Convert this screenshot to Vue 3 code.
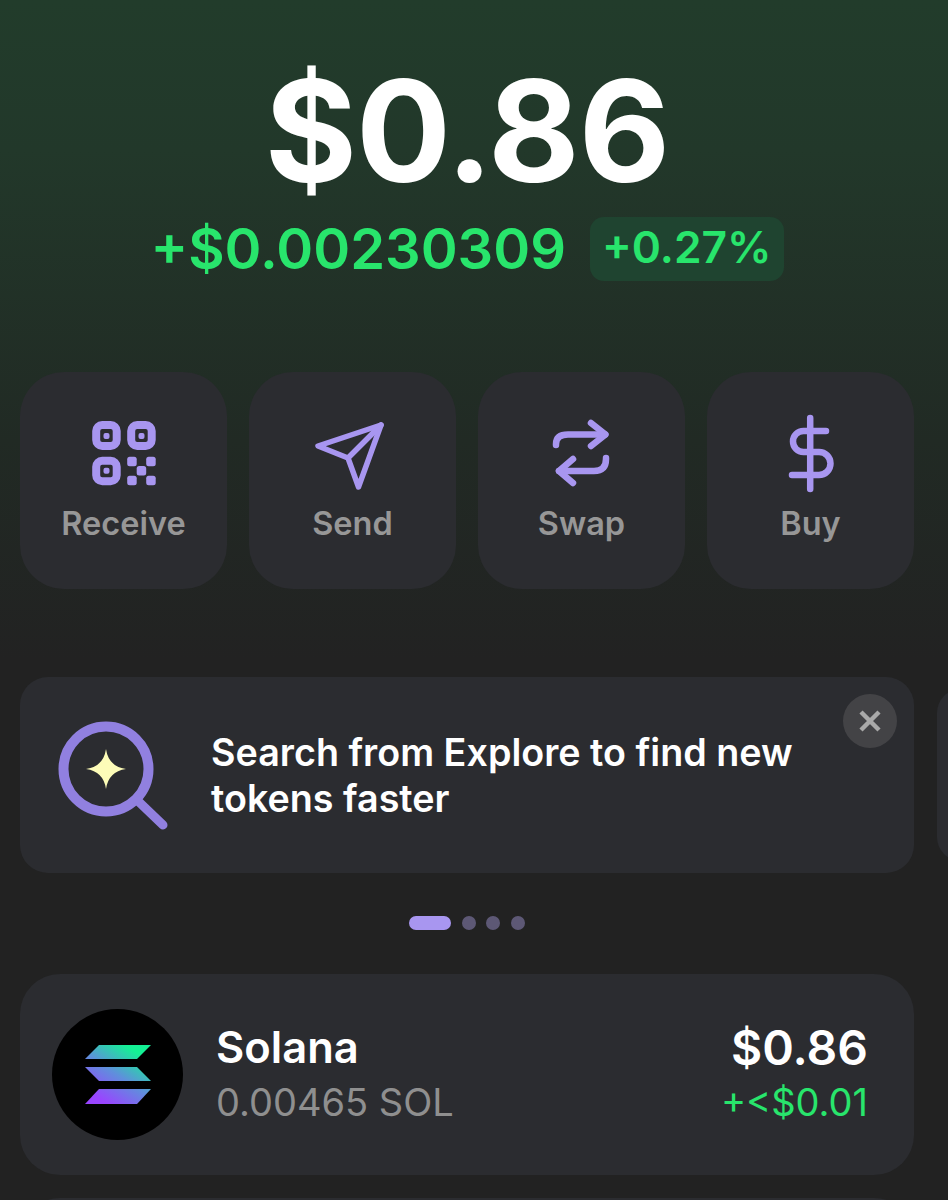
<script setup>
const actions = ['Receive', 'Send', 'Swap', 'Buy']
</script>

<template>
  <div class="page">
    <section class="hero">
      <div class="balance">$0.86</div>
      <div class="change">
        <span class="delta">+$0.00230309</span>
        <span class="pct">+0.27%</span>
      </div>
    </section>

    <section class="actions">
      <div v-for="a in actions" :key="a" class="action">
        <svg v-if="a === 'Receive'" class="icon" viewBox="0 0 72 72" fill="none">
          <g stroke="#a896f0" stroke-width="8">
            <rect x="8.200" y="7" width="20.500" height="21" rx="6" />
            <rect x="43.200" y="7" width="20.500" height="21" rx="6" />
            <rect x="8.200" y="42.700" width="20.500" height="20.500" rx="6" />
          </g>
          <g fill="#a896f0">
            <rect x="15.500" y="15" width="6" height="6" rx="2" />
            <rect x="50.500" y="15" width="6" height="6" rx="2" />
            <rect x="15.500" y="49.800" width="6" height="6" rx="2" />
            <rect x="39.200" y="38.700" width="9.500" height="9.500" rx="2.500" />
            <rect x="58.200" y="38.700" width="9.500" height="9.500" rx="2.500" />
            <rect x="48.700" y="48" width="9.500" height="9.500" rx="2.500" />
            <rect x="39.200" y="57.700" width="9.500" height="9.500" rx="2.500" />
            <rect x="58.200" y="57.700" width="9.500" height="9.500" rx="2.500" />
          </g>
        </svg>
        <svg v-else-if="a === 'Send'" class="icon" viewBox="0 0 72 72" fill="none" stroke="#a896f0" stroke-width="5.500" stroke-linejoin="round" stroke-linecap="round">
          <path d="M64 7 1 28 31 40 41.500 69Z" />
          <path d="M64 7 31 40" />
        </svg>
        <svg v-else-if="a === 'Swap'" class="icon" viewBox="0 0 72 72" fill="none" stroke="#a896f0" stroke-width="6.500" stroke-linejoin="round" stroke-linecap="round">
          <path d="M10 27V26Q10 16.500 22 16.500H59" />
          <path d="M45 5 59.500 16.500 45 28" />
          <path d="M60 40V41Q60 53 48 53H13" />
          <path d="M27 41 13 53 27 65" />
        </svg>
        <svg v-else class="icon" viewBox="0 0 72 72" fill="none" stroke="#a896f0" stroke-width="6.500" stroke-linecap="round">
          <path d="M35.200 0V71" />
          <path d="M51 13H28.500A10.500 10.500 0 0 0 28.500 34H44A11.500 11.500 0 0 1 44 57H17" />
        </svg>
        <span class="label">{{ a }}</span>
      </div>
    </section>

    <section class="carousel">
      <div class="banner">
        <svg class="search" viewBox="0 0 110 112" fill="none">
          <circle cx="48" cy="50" r="42.500" stroke="#9180e0" stroke-width="10" />
          <path d="M80 82 105 106" stroke="#9180e0" stroke-width="9" stroke-linecap="round" />
          <path d="M48 30Q50.500 47.500 68 50 50.500 52.500 48 70 45.500 52.500 28 50 45.500 47.500 48 30Z" fill="#fdfcb8" />
        </svg>
        <p class="banner-text">Search from Explore to find new tokens faster</p>
        <button class="close" aria-label="Close">
          <svg viewBox="0 0 24 24" width="24" height="24" fill="none" stroke="#a9a9a9" stroke-width="4.500">
            <path d="M3 3 21 21M21 3 3 21" />
          </svg>
        </button>
      </div>
      <div class="peek"></div>
    </section>

    <div class="dots">
      <span class="pill"></span>
      <span class="dot"></span>
      <span class="dot"></span>
      <span class="dot"></span>
    </div>

    <section class="token">
      <div class="logo">
        <svg viewBox="0 0 66 60" width="66" height="60">
          <defs>
            <linearGradient id="sol" gradientUnits="userSpaceOnUse" x1="14" y1="62" x2="54" y2="0">
              <stop offset="0.1" stop-color="#9945ff" />
              <stop offset="0.5" stop-color="#5f8fdc" />
              <stop offset="0.9" stop-color="#14f195" />
            </linearGradient>
          </defs>
          <path fill="url(#sol)" d="M14 0H66L52 14H0Z" />
          <path fill="url(#sol)" d="M0 22H52L66 36H14Z" />
          <path fill="url(#sol)" d="M14 44H66L52 59H0Z" />
        </svg>
      </div>
      <div class="token-name">
        <div class="name">Solana</div>
        <div class="amount">0.00465 SOL</div>
      </div>
      <div class="token-value">
        <div class="value">$0.86</div>
        <div class="gain">+&lt;$0.01</div>
      </div>
    </section>

    <section class="token next"></section>
  </div>
</template>

<style>
html, body { margin: 0; background: #222222; }
</style>

<style scoped>
.page {
  width: 948px;
  height: 1200px;
  overflow: hidden;
  box-sizing: border-box;
  padding: 0 34px 0 20px;
  background: linear-gradient(180deg, #223c2b 0, #22382a 150px, #212a24 440px, #222222 660px);
  font-family: Inter, "Liberation Sans", sans-serif;
}
.hero {
  display: flex;
  flex-direction: column;
  align-items: center;
  padding-top: 56px;
  height: 326px;
  box-sizing: border-box;
}
.balance {
  color: #fff;
  font-size: 141px;
  font-weight: 700;
  line-height: 150px;
  letter-spacing: -1px;
}
.change {
  display: flex;
  align-items: center;
  gap: 24px;
  margin-top: 10px;
}
.delta {
  color: #28e56c;
  font-size: 56px;
  font-weight: 600;
  line-height: 66px;
}
.pct {
  color: #28e56c;
  font-size: 44.300px;
  font-weight: 600;
  line-height: 60px;
  padding: 0 12px 4px;
  border-radius: 14px;
  background: #1f4430;
}
.actions {
  display: grid;
  grid-template-columns: repeat(4, 207px);
  column-gap: 22px;
  margin-top: 46px;
}
.action {
  height: 217px;
  box-sizing: border-box;
  border-radius: 44px;
  background: #2b2c30;
  display: flex;
  flex-direction: column;
  align-items: center;
  padding-top: 46px;
}
.icon {
  width: 72px;
  height: 72px;
  overflow: visible;
}
.label {
  margin-top: 14px;
  color: #979797;
  font-size: 32.500px;
  font-weight: 600;
  line-height: 40px;
}
.carousel {
  display: flex;
  gap: 23px;
  margin-top: 88px;
  width: 960px;
}
.banner {
  position: relative;
  flex: 0 0 894px;
  height: 196px;
  box-sizing: border-box;
  border-radius: 28px;
  background: #2b2c30;
  display: flex;
  align-items: center;
  padding: 0 100px 0 38px;
  gap: 43px;
}
.search {
  flex: none;
  width: 110px;
  height: 112px;
}
.banner-text {
  margin: 0;
  color: #fff;
  font-size: 37.700px;
  font-weight: 600;
  line-height: 46px;
}
.close {
  position: absolute;
  top: 17px;
  right: 17px;
  width: 54px;
  height: 54px;
  padding: 0;
  border: 0;
  border-radius: 50%;
  background: #434346;
  display: flex;
  align-items: center;
  justify-content: center;
}
.peek {
  flex: 0 0 100px;
  height: 172px;
  align-self: center;
  border-radius: 24px;
  background: #2b2c30;
}
.dots {
  display: flex;
  align-items: center;
  gap: 10.500px;
  margin-top: 43px;
  margin-left: 389px;
  height: 14px;
}
.pill {
  width: 42px;
  height: 14px;
  border-radius: 7px;
  background: #a896f0;
}
.dot {
  width: 14px;
  height: 14px;
  border-radius: 50%;
  background: #5d5875;
}
.token {
  margin-top: 44px;
  height: 201px;
  box-sizing: border-box;
  border-radius: 40px;
  background: #2b2c30;
  display: flex;
  align-items: center;
  padding: 0 46px 0 32px;
}
.logo {
  flex: none;
  width: 131px;
  height: 131px;
  border-radius: 50%;
  background: #000;
  display: flex;
  align-items: center;
  justify-content: center;
}
.token-name {
  flex: 1;
  margin-left: 33px;
}
.name {
  color: #fff;
  font-size: 43.500px;
  font-weight: 600;
  line-height: 54px;
}
.amount {
  color: #8f8f8f;
  font-size: 38px;
  font-weight: 400;
  line-height: 54px;
  padding-top: 1px;
}
.token-value {
  text-align: right;
}
.value {
  color: #fff;
  font-size: 48px;
  font-weight: 600;
  line-height: 54px;
  padding-top: 1px;
}
.gain {
  color: #28e56c;
  font-size: 38px;
  font-weight: 400;
  line-height: 54px;
}
.next {
  margin-top: 23px;
}
</style>
